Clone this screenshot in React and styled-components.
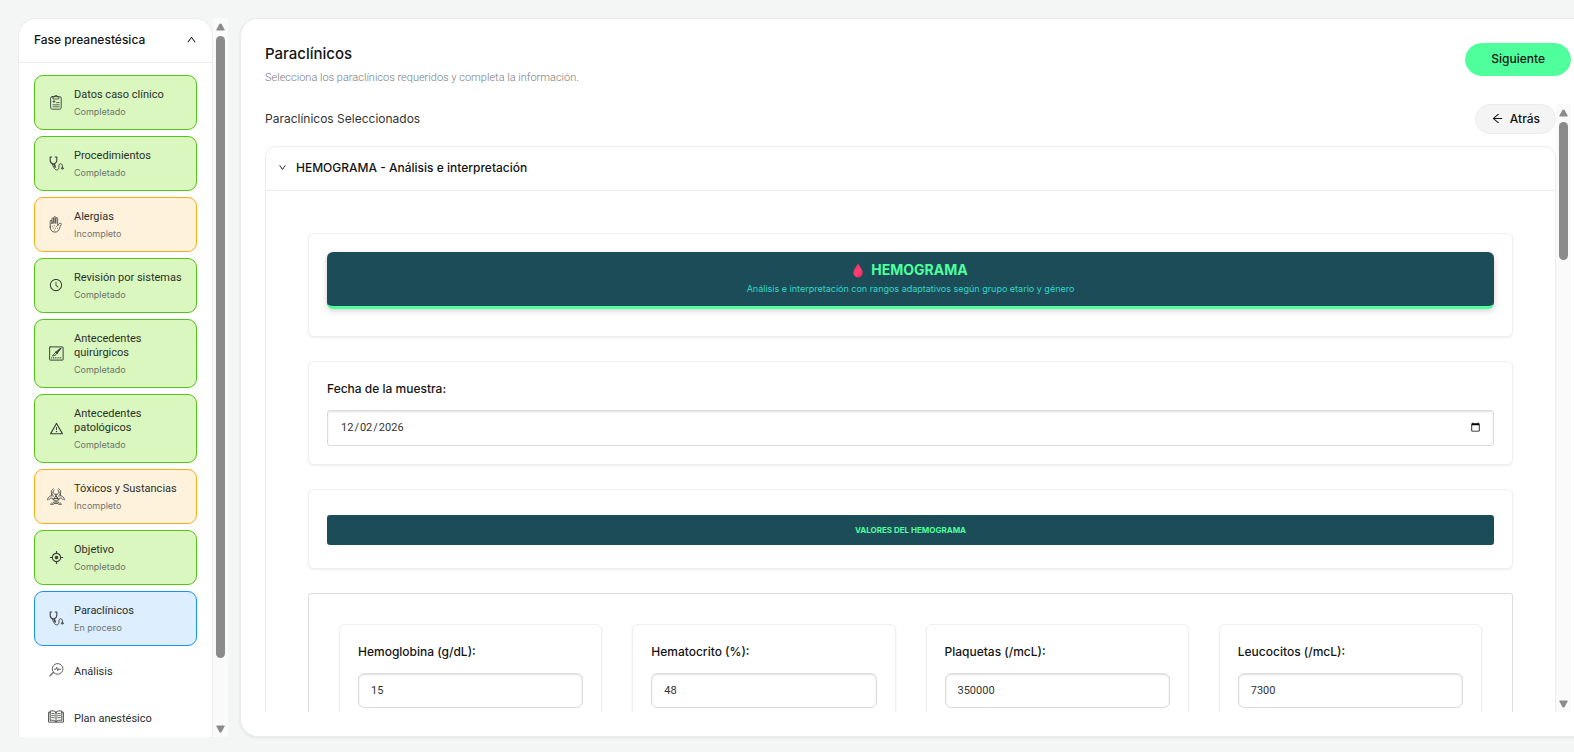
import { useId, useState } from "react";
import styled, { createGlobalStyle, css } from "styled-components";
import {
  AiOutlineAim,
  AiOutlineArrowLeft,
  AiOutlineClockCircle,
  AiOutlineDown,
  AiOutlineUp,
  AiOutlineWarning,
} from "react-icons/ai";

const GlobalStyle = createGlobalStyle`
  :root {
    --font-narrow: Roboto, "Liberation Sans", sans-serif;
  }

  *,
  *::before,
  *::after {
    box-sizing: border-box;
  }

  body {
    margin: 0;
    background: #f4f6f5;
    color: #1f1f1f;
    font-family: Inter, "Liberation Sans", sans-serif;
    font-size: 12px;
    line-height: 16px;
  }

  button,
  input {
    font-family: inherit;
  }
`;

const Page = styled.div`
  display: flex;
  gap: 12px;
  height: 100vh;
  padding: 18px 0 15px 18px;
  overflow: hidden;
`;

const Sidebar = styled.aside`
  display: flex;
  flex: none;
  width: 210px;
`;

const Phase = styled.div`
  flex: 1;
  min-width: 0;
  overflow: hidden;
  background: #fff;
  border: 1px solid #ececec;
  border-bottom: none;
  border-radius: 18px 18px 0 0;
`;

const PhaseHeader = styled.button`
  display: flex;
  align-items: center;
  justify-content: space-between;
  width: 100%;
  height: 44px;
  padding: 0 15px 2px;
  background: none;
  border: none;
  border-bottom: 1px solid #ececec;
  color: #141414;
  font-size: 12px;
  font-weight: 500;
`;

const StepList = styled.nav`
  display: flex;
  flex-direction: column;
  gap: 6px;
  padding: 12px 15px;
`;

const statusStyles = {
  Completado: css`
    background: #d9f7be;
    border-color: #52c41a;
  `,
  Incompleto: css`
    background: #fff2dc;
    border-color: #faad14;
  `,
  "En proceso": css`
    background: #dceeff;
    border-color: #1890ff;
  `,
};

const Step = styled.button`
  display: flex;
  align-items: center;
  gap: 9px;
  flex: none;
  min-height: 41px;
  padding: ${(props) => (props.$status ? "12px 10px 9px 12px" : "0 12px 2px")};
  background: none;
  border: 1px solid transparent;
  border-radius: 9px;
  color: #2b2f2b;
  text-align: left;
  ${(props) => statusStyles[props.$status]}
`;

const StepIcon = styled.span`
  display: flex;
  flex: none;
  align-items: center;
  justify-content: center;
  width: 18px;
  padding-bottom: 4px;
  color: #3c403c;

  svg {
    flex: none;
  }
`;

const StepText = styled.span`
  display: flex;
  flex-direction: column;
  gap: 2px;
`;

const StepName = styled.span`
  font-family: var(--font-narrow);
  font-size: 11px;
  line-height: 14px;
`;

const StepStatus = styled.span`
  color: #6d746d;
  font-size: 9px;
  line-height: 16px;
`;

const Track = styled.div`
  display: flex;
  flex: none;
  flex-direction: column;
  align-items: center;
  gap: 5px;
  width: 15px;
  padding: 5px 0 4px;
  background: #fafafa;
`;

const ThumbArea = styled.div`
  flex: 1;
  width: 9px;
`;

const Thumb = styled.div`
  height: ${(props) => props.$size};
  background: #8b8b8b;
  border-radius: 5px;
`;

const Panel = styled.main`
  display: flex;
  flex: 1;
  flex-direction: column;
  min-width: 0;
  margin-right: -22px;
  padding: 24px;
  background: #fff;
  border: 1px solid #ececec;
  border-radius: 18px;
  box-shadow: 0 1px 3px rgba(0, 0, 0, 0.08);
`;

const PanelHeader = styled.header`
  display: flex;
  align-items: flex-start;
  justify-content: space-between;
  height: 61px;
`;

const Title = styled.h1`
  margin: 0;
  color: #141414;
  font-size: 15px;
  font-weight: 500;
  line-height: 22px;
`;

const Subtitle = styled.p`
  margin: 5px 0 0;
  color: #7a7a7a;
  font-family: var(--font-narrow);
  font-size: 11px;
  font-weight: 300;
  line-height: 16px;
`;

const PillButton = styled.button`
  display: flex;
  align-items: center;
  justify-content: center;
  gap: 6px;
  height: ${(props) => (props.$primary ? "33px" : "30px")};
  padding: 0 ${(props) => (props.$primary ? "25px" : "15px")} 2px;
  background: ${(props) => (props.$primary ? "#4fff9c" : "#f4f4f4")};
  border: 1px solid ${(props) => (props.$primary ? "#4fff9c" : "#ececec")};
  border-radius: 17px;
  color: #141414;
  font-size: 12px;
  font-weight: 500;
`;

const ScrollArea = styled.div`
  display: flex;
  flex: 1;
  min-height: 0;
`;

const Content = styled.div`
  flex: 1;
  min-width: 0;
  overflow: hidden;
`;

const SectionBar = styled.div`
  display: flex;
  align-items: center;
  justify-content: space-between;
  margin-bottom: 12px;
`;

const SectionTitle = styled.h2`
  margin: 0;
  color: #333;
  font-size: 12px;
  font-weight: 400;
`;

const Collapse = styled.section`
  border: 1px solid #ececec;
  border-radius: 11px 11px 0 0;
`;

const CollapseHeader = styled.button`
  display: flex;
  align-items: center;
  gap: 9px;
  width: 100%;
  height: 44px;
  padding: 0 12px 2px;
  background: none;
  border: none;
  border-bottom: 1px solid #ececec;
  color: #141414;
  font-size: 12px;
  font-weight: 500;
`;

const CollapseBody = styled.div`
  display: flex;
  flex-direction: column;
  gap: 24px;
  padding: 42px;
`;

const Card = styled.div`
  padding: ${(props) => props.$pad || "18px"};
  border: 1px solid #efefef;
  border-radius: 6px;
  box-shadow: 0 1px 2px rgba(0, 0, 0, 0.08);
`;

const Banner = styled.div`
  display: flex;
  flex-direction: column;
  align-items: center;
  gap: 2px;
  height: 57px;
  padding: 9px;
  background: #1c4c58;
  border-bottom: 3px solid #4fff9c;
  border-radius: 6px;
  box-shadow: 0 2px 6px rgba(0, 0, 0, 0.18);
`;

const BannerTitle = styled.h3`
  display: flex;
  align-items: center;
  gap: 8px;
  margin: 0;
  color: #4fff9c;
  font-size: 14px;
  font-weight: 700;
  line-height: 18px;
`;

const BannerText = styled.p`
  margin: 0;
  color: #35d6c8;
  font-size: 9px;
  line-height: 16px;
`;

const GroupTitle = styled.h3`
  margin: 0;
  background: #1c4c58;
  border-radius: 3px;
  color: #4fff9c;
  font-size: 8px;
  font-weight: 700;
  line-height: 30px;
  text-align: center;
`;

const Field = styled.div`
  display: flex;
  flex-direction: column;
  gap: 12px;
`;

const Label = styled.label`
  color: #141414;
  font-size: 12px;
  font-weight: 500;
  line-height: 18px;
`;

const Input = styled.input`
  width: 100%;
  height: ${(props) => (props.type === "date" ? "36px" : "35px")};
  padding: ${(props) => (props.type === "date" ? "0 10px 2px 12px" : "0 12px")};
  background: #fff;
  border: 1px solid #dcdcdc;
  border-radius: ${(props) => (props.type === "date" ? "3px" : "6px")};
  box-shadow: inset 0 1px 2px rgba(0, 0, 0, 0.12);
  color: #333;
  font-family: var(--font-narrow);
  font-size: 11px;
  outline: none;
`;

const Values = styled.div`
  display: grid;
  grid-template-columns: repeat(4, 1fr);
  gap: 30px;
  padding: 30px;
  border: 1px solid #dcdcdc;
  border-radius: 3px;
`;

const Svg = styled.svg`
  display: block;
  fill: none;
  stroke: currentColor;
  stroke-linecap: round;
  stroke-linejoin: round;
`;

function ClipboardIcon() {
  return (
    <Svg width="12" height="15" viewBox="0 0 12 15">
      <rect x="0.6" y="1.6" width="10.6" height="12.6" rx="1.6" strokeWidth="0.9" />
      <path d="M3 3.6V1.8h1.4a1.5 1.5 0 0 1 3 0h1.4v1.8z" strokeWidth="0.8" />
      <path d="M4 5.4v2.2M2.9 6.5h2.2M6.6 7.6h2.6M3 9.8h6.2M3 11.8h6.2" strokeWidth="0.8" />
    </Svg>
  );
}

function StethoscopeIcon() {
  return (
    <Svg width="15" height="15" viewBox="0 0 15 15">
      <path
        d="M2.6 1H1.2v3.2c0 2 1.2 3.4 2.9 4.1 2-.7 3.7-2.1 3.7-4.1V1H6.2"
        strokeWidth="1.1"
      />
      <path
        d="M3.3 8.100l1.400 3.200c.8 1.700 1.800 2.600 3.100 2.600 1.600 0 2.100-1.100 2.100-2.600 0-2.100.3-3.600 1.700-3.600s1.900 1.200 1.900 3.500"
        strokeWidth="0.9"
      />
      <path d="M5.2 8.100l1 2.800" strokeWidth="1.6" />
      <circle cx="13.3" cy="12.300" r="0.9" strokeWidth="1" />
    </Svg>
  );
}

function HandIcon() {
  return (
    <Svg width="14" height="17" viewBox="0 0 14 17" strokeWidth="0.8">
      <path d="M1.2 11V5.200a.9.9 0 0 1 1.800 0V8V2.800a.9.9 0 0 1 1.900 0V7.500V1.600a.9.9 0 0 1 1.900 0V7.500V2.600a.9.9 0 0 1 1.900 0V9.800c.6-1.500 1.600-2.600 2.900-2.500.9.1.9.9.5 1.400-.9 1-1.100 2.200-1.500 3.500-.7 2.300-2.200 3.900-4.600 3.900-3 0-4.800-1.800-4.800-5.100z" />
      <path d="M3.200 10.200h.1M5.400 9.800h.1M7.500 10.400h.1M4.200 12.200h.1M6.500 12.200h.1M8.500 12.200h.1M5.400 14h.1" />
    </Svg>
  );
}

function ScalpelIcon() {
  return (
    <Svg width="15" height="15" viewBox="0 0 15 15">
      <rect x="0.6" y="0.9" width="13.5" height="13.2" rx="0.5" strokeWidth="1" />
      <path
        d="M2.2 11.8h10.500"
        strokeWidth="1.2"
        strokeDasharray="1 0.8"
        strokeLinecap="butt"
      />
      <path d="M11.9 2.300L7.500 5.400 3.400 9.900c1.900 0 3.500-.7 4.500-2.200z" strokeWidth="0.9" />
      <path d="M6.900 6l1.500 1.400M10.900 3.100L7.500 6.900" strokeWidth="1.2" />
    </Svg>
  );
}

function BiohazardIcon() {
  return (
    <Svg width="18" height="17" viewBox="0 0 18 17" strokeWidth="0.8">
      <path d="M6.300.8C3.600 2.300 3.500 5.800 6 7.400M11.700.8c2.700 1.500 2.800 5 .3 6.600" />
      <path d="M7 2C5.600 3.200 5.800 5.100 7.200 5.900c1.100.6 2.500.6 3.600 0C12.200 5.100 12.400 3.200 11 2" />
      <path d="M.6 11.900c-.1-3 2.900-5 5.600-3.800M3.400 16.200c2.700 1.300 5.500-.7 5.300-3.600M2 11.700c.6-1.800 2.700-2.300 3.900-1.200M4.400 15.200c1.900.3 3.200-1.100 2.900-2.900" />
      <path d="M17.400 11.900c.1-3-2.900-5-5.600-3.800M14.600 16.200c-2.700 1.300-5.500-.7-5.300-3.600M16 11.700c-.6-1.800-2.700-2.300-3.900-1.200M13.600 15.200c-1.900.3-3.200-1.100-2.900-2.900" />
      <circle cx="9" cy="9.600" r="1.300" />
      <path d="M9 6.400v1.900M7.900 10.300l-1.800 1.200M10.100 10.300l1.800 1.200" strokeWidth="1.2" />
      <path d="M4.300 7.300c.1-.9.400-1.700.8-2.400M13.700 7.300c-.1-.9-.4-1.700-.8-2.400M7.200 15.300c1.200.4 2.400.4 3.600 0" />
    </Svg>
  );
}

function AnalysisIcon() {
  return (
    <Svg width="15" height="14" viewBox="0 0 15 14" strokeWidth="0.8">
      <circle cx="8.600" cy="5.900" r="5.300" strokeDasharray="2.600 0.5" />
      <path d="M4.700 9.800L1 13.300M3.900 9.400L.8 12.400" />
      <path d="M5.400 6.200h1.500l.9-1.900 1 3.400.9-2 .5.500h1.500" />
    </Svg>
  );
}

function BookIcon() {
  return (
    <Svg width="16" height="13" viewBox="0 0 16 13" strokeWidth="0.9">
      <path d="M8 2.200C6.300.8 4.300.5 2.200 1v9.400c2.100-.5 4.100-.2 5.800 1.100 1.700-1.300 3.700-1.600 5.800-1.100V1C11.700.5 9.700.8 8 2.200zM8 2.200v9.300" />
      <path d="M2.200 2.200H.6v9.900h6.500l.9.400.9-.4h6.500V2.200h-1.600" />
      <path
        d="M3.700 3.400c1-.2 1.900 0 2.800.4M3.700 5.400c1-.2 1.900 0 2.800.4M3.700 7.400c1-.2 1.900 0 2.800.4M12.300 3.400c-1-.2-1.900 0-2.800.4M12.300 5.400c-1-.2-1.900 0-2.800.4M12.300 7.400c-1-.2-1.900 0-2.800.4"
        strokeWidth="0.8"
      />
    </Svg>
  );
}

function DropIcon() {
  return (
    <svg width="10" height="15" viewBox="0 0 10 15" aria-hidden="true">
      <defs>
        <linearGradient id="drop" x1="0" y1="0" x2="1" y2="1">
          <stop offset="0" stopColor="#d8305c" />
          <stop offset="0.55" stopColor="#ff3f74" />
          <stop offset="1" stopColor="#f4205a" />
        </linearGradient>
      </defs>
      <path
        d="M5 .3C4.200 2.800.3 6.300.3 9.800a4.700 4.700 0 0 0 9.400 0C9.700 6.300 5.800 2.800 5 .3z"
        fill="url(#drop)"
      />
    </svg>
  );
}

function Arrow({ down }) {
  return (
    <svg width="9" height="8" viewBox="0 0 9 8" aria-hidden="true">
      <path
        d={
          down
            ? "M.8.5h7.400q.8 0 .5.800L5.600 6.900q-1.100 1.400-2.200 0L.3 1.300Q0 .5.800.5z"
            : "M.8 7.500h7.400q.8 0 .5-.8L5.600 1.100q-1.100-1.400-2.200 0L.3 6.700Q0 7.500.8 7.500z"
        }
        fill="#8b8b8b"
      />
    </svg>
  );
}

function ScrollTrack({ size }) {
  return (
    <Track aria-hidden="true">
      <Arrow />
      <ThumbArea>
        <Thumb $size={size} />
      </ThumbArea>
      <Arrow down />
    </Track>
  );
}

const steps = [
  { name: "Datos caso clínico", status: "Completado", icon: <ClipboardIcon /> },
  { name: "Procedimientos", status: "Completado", icon: <StethoscopeIcon /> },
  { name: "Alergias", status: "Incompleto", icon: <HandIcon /> },
  {
    name: "Revisión por sistemas",
    status: "Completado",
    icon: <AiOutlineClockCircle size={14} />,
  },
  {
    name: "Antecedentes quirúrgicos",
    status: "Completado",
    icon: <ScalpelIcon />,
  },
  {
    name: "Antecedentes patológicos",
    status: "Completado",
    icon: <AiOutlineWarning size={15} />,
  },
  {
    name: "Tóxicos y Sustancias",
    status: "Incompleto",
    icon: <BiohazardIcon />,
  },
  { name: "Objetivo", status: "Completado", icon: <AiOutlineAim size={15} /> },
  { name: "Paraclínicos", status: "En proceso", icon: <StethoscopeIcon /> },
  { name: "Análisis", icon: <AnalysisIcon /> },
  { name: "Plan anestésico", icon: <BookIcon /> },
];

const values = [
  { label: "Hemoglobina (g/dL):", value: "15" },
  { label: "Hematocrito (%):", value: "48" },
  { label: "Plaquetas (/mcL):", value: "350000" },
  { label: "Leucocitos (/mcL):", value: "7300" },
];

function FormField({ label, type = "text", initial }) {
  const id = useId();
  const [value, setValue] = useState(initial);

  return (
    <Field>
      <Label htmlFor={id}>{label}</Label>
      <Input
        id={id}
        type={type}
        value={value}
        onChange={(e) => setValue(e.target.value)}
      />
    </Field>
  );
}

function App() {
  const [showSteps, setShowSteps] = useState(true);
  const [showPanel, setShowPanel] = useState(true);

  return (
    <>
      <GlobalStyle />
      <Page>
        <Sidebar>
          <Phase>
            <PhaseHeader
              aria-expanded={showSteps}
              onClick={() => setShowSteps((show) => !show)}
            >
              Fase preanestésica
              <AiOutlineUp size={11} />
            </PhaseHeader>
            {showSteps && (
              <StepList>
                {steps.map(({ name, status, icon }) => (
                  <Step key={name} $status={status}>
                    <StepIcon>{icon}</StepIcon>
                    <StepText>
                      <StepName>{name}</StepName>
                      {status && <StepStatus>{status}</StepStatus>}
                    </StepText>
                  </Step>
                ))}
              </StepList>
            )}
          </Phase>
          <ScrollTrack size="91%" />
        </Sidebar>

        <Panel>
          <PanelHeader>
            <div>
              <Title>Paraclínicos</Title>
              <Subtitle>
                Selecciona los paraclínicos requeridos y completa la
                información.
              </Subtitle>
            </div>
            <PillButton $primary>Siguiente</PillButton>
          </PanelHeader>

          <ScrollArea>
            <Content>
              <SectionBar>
                <SectionTitle>Paraclínicos Seleccionados</SectionTitle>
                <PillButton>
                  <AiOutlineArrowLeft size={13} />
                  Atrás
                </PillButton>
              </SectionBar>

              <Collapse>
                <CollapseHeader
                  aria-expanded={showPanel}
                  onClick={() => setShowPanel((show) => !show)}
                >
                  <AiOutlineDown size={9} />
                  HEMOGRAMA - Análisis e interpretación
                </CollapseHeader>
                {showPanel && (
                  <CollapseBody>
                    <Card $pad="18px 18px 27px">
                      <Banner>
                        <BannerTitle>
                          <DropIcon />
                          HEMOGRAMA
                        </BannerTitle>
                        <BannerText>
                          Análisis e interpretación con rangos adaptativos según
                          grupo etario y género
                        </BannerText>
                      </Banner>
                    </Card>
                    <Card>
                      <FormField
                        label="Fecha de la muestra:"
                        type="date"
                        initial="2026-12-02"
                      />
                    </Card>
                    <Card $pad="25px 18px 23px">
                      <GroupTitle>VALORES DEL HEMOGRAMA</GroupTitle>
                    </Card>
                    <Values>
                      {values.map(({ label, value }) => (
                        <Card key={label}>
                          <FormField label={label} initial={value} />
                        </Card>
                      ))}
                    </Values>
                  </CollapseBody>
                )}
              </Collapse>
            </Content>
            <ScrollTrack size="24%" />
          </ScrollArea>
        </Panel>
      </Page>
    </>
  );
}

export default App;
